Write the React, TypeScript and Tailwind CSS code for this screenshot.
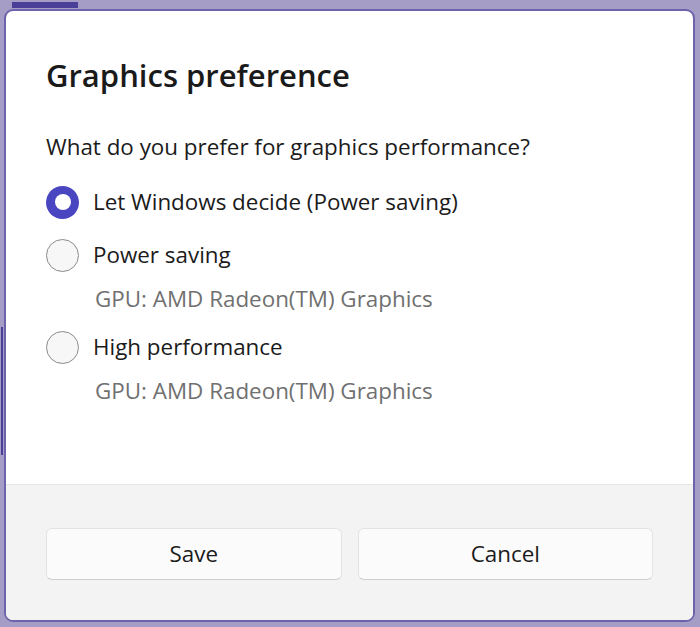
const font = { fontFamily: '"Open Sans", "Noto Sans", sans-serif' };

type Option = {
  label: string;
  gpu?: string;
  selected?: boolean;
};

const options: Option[] = [
  { label: "Let Windows decide (Power saving)", selected: true },
  { label: "Power saving", gpu: "GPU: AMD Radeon(TM) Graphics" },
  { label: "High performance", gpu: "GPU: AMD Radeon(TM) Graphics" },
];

function Radio({ selected }: { selected?: boolean }) {
  if (selected) {
    return (
      <span className="flex h-[33px] w-[33px] shrink-0 items-center justify-center rounded-full bg-[#4a45c0]">
        <span className="h-[16px] w-[16px] rounded-full bg-white" />
      </span>
    );
  }
  return (
    <span className="h-[33px] w-[33px] shrink-0 rounded-full border-[1.5px] border-[#8a8a8a] bg-[#f7f7f7]" />
  );
}

export default function App() {
  return (
    <div
      className="relative h-[627px] w-[700px] overflow-hidden bg-[#a59dc6] pl-[4px] pr-[5px] pt-[9px] pb-[5px]"
      style={font}
    >
      <div className="absolute left-[12px] top-[2px] h-[6px] w-[66px] bg-[#4a3f98]" />
      <div className="absolute left-[1px] top-[327px] h-[128px] w-[2px] bg-[#4a3f98]" />

      <div className="flex h-full flex-col overflow-hidden rounded-[9px] border-2 border-[#6d63ab] bg-white">
        <div className="flex-1 px-[40px] pt-[44px]">
          <h1 className="text-[31px] font-semibold leading-[40px] text-[#1a1a1a]">
            Graphics preference
          </h1>
          <p className="mt-[37px] text-[22.4px] leading-[30px] text-[#1b1b1b]">
            What do you prefer for graphics performance?
          </p>
          <div className="mt-[20px] flex flex-col gap-[13px]">
            {options.map((option) => (
              <div key={option.label} className="flex flex-col gap-[9px]">
                <div className="flex h-[40px] items-center gap-[14px]">
                  <Radio selected={option.selected} />
                  <span className="text-[22.4px] text-[#1b1b1b]">{option.label}</span>
                </div>
                {option.gpu ? (
                  <div className="pl-[49px] text-[22.4px] leading-[30px] text-[#707070]">
                    {option.gpu}
                  </div>
                ) : null}
              </div>
            ))}
          </div>
        </div>

        <div className="flex h-[136px] gap-[16px] border-t border-[#e6e6e6] bg-[#f3f3f3] px-[40px] pt-[43px]">
          <button className="h-[52px] flex-1 rounded-[6px] border border-[#e3e3e3] border-b-[#cfcfcf] bg-[#fbfbfb] text-[22.4px] text-[#1b1b1b]">
            Save
          </button>
          <button className="h-[52px] flex-1 rounded-[6px] border border-[#e3e3e3] border-b-[#cfcfcf] bg-[#fbfbfb] text-[22.4px] text-[#1b1b1b]">
            Cancel
          </button>
        </div>
      </div>
    </div>
  );
}
